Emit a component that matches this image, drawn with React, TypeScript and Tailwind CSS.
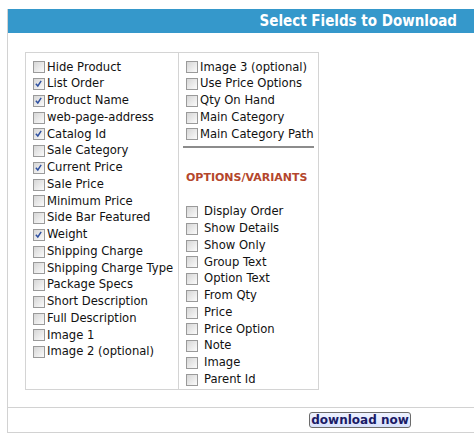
import React from "react";

const left: [string, boolean][] = [
  ["Hide Product", false],
  ["List Order", true],
  ["Product Name", true],
  ["web-page-address", false],
  ["Catalog Id", true],
  ["Sale Category", false],
  ["Current Price", true],
  ["Sale Price", false],
  ["Minimum Price", false],
  ["Side Bar Featured", false],
  ["Weight", true],
  ["Shipping Charge", false],
  ["Shipping Charge Type", false],
  ["Package Specs", false],
  ["Short Description", false],
  ["Full Description", false],
  ["Image 1", false],
  ["Image 2 (optional)", false],
];

const rightTop = [
  "Image 3 (optional)",
  "Use Price Options",
  "Qty On Hand",
  "Main Category",
  "Main Category Path",
];

const options = [
  "Display Order",
  "Show Details",
  "Show Only",
  "Group Text",
  "Option Text",
  "From Qty",
  "Price",
  "Price Option",
  "Note",
  "Image",
  "Parent Id",
];

function Box({ checked }: { checked: boolean }) {
  return (
    <span className="relative inline-block w-[12px] h-[12px] shrink-0 border border-[#9a9a9a] bg-gradient-to-br from-[#d6d6d6] to-[#fbfbfb]">
      {checked && (
        <svg
          viewBox="0 0 12 12"
          className="absolute left-[0px] top-[0px] w-[10px] h-[10px]"
        >
          <path
            d="M2.2 5.6 L4.6 8.4 L8.6 2.2"
            fill="none"
            stroke="#2d4fa0"
            strokeWidth="1.7"
          />
        </svg>
      )}
    </span>
  );
}

function Row({
  label,
  checked = false,
  spaced = false,
}: {
  label: string;
  checked?: boolean;
  spaced?: boolean;
}) {
  return (
    <div
      className={`flex items-center h-[16.75px] ${spaced ? "gap-[6px]" : "gap-[2px]"}`}
    >
      <Box checked={checked} />
      <span className="whitespace-nowrap">{label}</span>
    </div>
  );
}

export default function App() {
  return (
    <div
      className="w-[474px] h-[446px] bg-white pt-[9px] pl-[7px] text-[#111] text-[11.6px]"
      style={{ fontFamily: '"DejaVu Sans", Verdana, sans-serif' }}
    >
      <div className="border-l border-b border-[#d2d2d2]">
        <div className="h-[24px] bg-[#3598cb] flex items-center justify-end pr-[17px]">
          <span
            className="text-white font-bold text-[15px] leading-none"
            style={{ fontFamily: '"DejaVu Sans Condensed", "DejaVu Sans", sans-serif' }}
          >
            Select Fields to Download
          </span>
        </div>
        <div className="pl-[17px] pt-[19px] pb-[17px]">
          <div className="flex w-[294px] border border-[#d4d4d4] bg-white">
            <div className="w-[153px] border-r border-[#d4d4d4] pl-[7px] pt-[6px]">
              {left.map(([l, c]) => (
                <Row key={l} label={l} checked={c} />
              ))}
            </div>
            <div className="flex-1 pl-[7px] pt-[6px] pb-[1px]">
              {rightTop.map((l) => (
                <Row key={l} label={l} />
              ))}
              <div className="mt-[3px] ml-[-3px] w-[131px] h-[2px] bg-[#8c8c8c]" />
              <div className="h-[56px] pt-[4px] flex items-center font-bold text-[11px] text-[#b4462c]">
                OPTIONS/VARIANTS
              </div>
              {options.map((l) => (
                <Row key={l} label={l} spaced />
              ))}
            </div>
          </div>
        </div>
        <div className="border-t border-[#d2d2d2] h-[25px] pl-[301px] pt-[4px]">
          <button className="w-[102px] h-[16px] flex items-center justify-center rounded-[3px] border border-[#6b6b6b] bg-gradient-to-b from-[#eef2ff] to-[#d7e0fb] text-[#1a1a66] font-bold text-[12px] leading-none">
            download now
          </button>
        </div>
      </div>
    </div>
  );
}
